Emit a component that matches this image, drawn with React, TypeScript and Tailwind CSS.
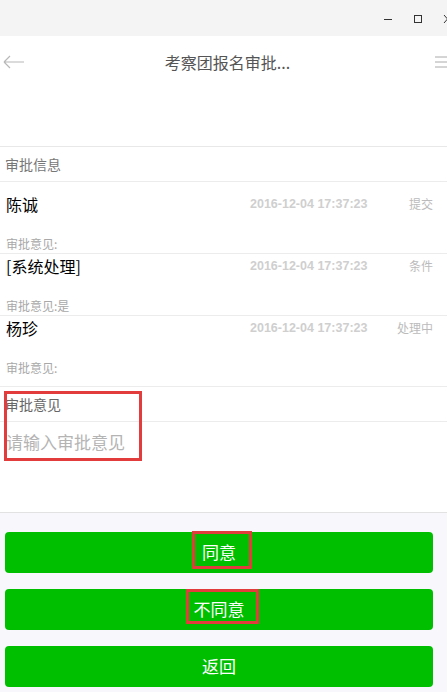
import React from "react";

const cjk = { fontFamily: '"Noto Sans CJK SC", "Liberation Sans", sans-serif' };

interface Record {
  name: string;
  time: string;
  status: string;
  opinion: string;
  top: string;
  bottom: string;
}

const records: Record[] = [
  { name: "陈诚", time: "2016-12-04 17:37:23", status: "提交", opinion: "审批意见:", top: "pt-[12px]", bottom: "pb-[2px]" },
  { name: "[系统处理]", time: "2016-12-04 17:37:23", status: "条件", opinion: "审批意见:是", top: "pt-[2px]", bottom: "pb-[2px]" },
  { name: "杨珍", time: "2016-12-04 17:37:23", status: "处理中", opinion: "审批意见:", top: "pt-[2px]", bottom: "pb-[11px]" },
];

function TitleBar() {
  return (
    <div className="h-[36px] bg-[#f4f4f4] flex items-center justify-end gap-[20px]">
      <svg width="10" height="10" viewBox="0 0 10 10" className="mt-[2px]">
        <line x1="1" y1="5.5" x2="9" y2="5.5" stroke="#333" strokeWidth="1" />
      </svg>
      <svg width="10" height="10" viewBox="0 0 10 10" className="mt-[2px]">
        <rect x="1.5" y="1.5" width="7" height="7" fill="none" stroke="#333" strokeWidth="1" />
      </svg>
      <svg width="4" height="10" viewBox="0 0 4 10" className="mt-[2px]">
        <line x1="1" y1="1" x2="8" y2="9" stroke="#333" strokeWidth="1" />
        <line x1="1" y1="9" x2="8" y2="1" stroke="#333" strokeWidth="1" />
      </svg>
    </div>
  );
}

function Header() {
  return (
    <div className="bg-white h-[111px] border-b border-[#e8e8e8]">
      <div className="h-[52px] flex items-center justify-between">
        <svg width="24" height="16" viewBox="0 0 24 16" className="ml-[2px]">
          <path d="M22 8H2M2 8L8 2M2 8L8 14" fill="none" stroke="#b8b8b8" strokeWidth="1.2" />
        </svg>
        <div className="text-[16px] text-[#555] pr-[6px]" style={cjk}>
          考察团报名审批...
        </div>
        <svg width="12" height="14" viewBox="0 0 12 14">
          <line x1="0" y1="2" x2="12" y2="2" stroke="#aaa" strokeWidth="1" />
          <line x1="0" y1="7" x2="12" y2="7" stroke="#aaa" strokeWidth="1" />
          <line x1="0" y1="12" x2="12" y2="12" stroke="#aaa" strokeWidth="1" />
        </svg>
      </div>
    </div>
  );
}

function RecordRow({ r }: { r: Record }) {
  return (
    <div className={`border-b border-[#ececec] ${r.top} ${r.bottom}`}>
      <div className="h-[20px] flex items-center">
        <div className="flex-1 pl-[6px] text-[16px] text-black" style={cjk}>
          {r.name}
        </div>
        <div
          className="text-[12.5px] font-bold text-[#cfcfcf] w-[118px]"
          style={{ fontFamily: '"Liberation Sans", Arial, sans-serif' }}
        >
          {r.time}
        </div>
        <div className="w-[79px] pr-[14px] text-right text-[12px] text-[#bbb]" style={cjk}>
          {r.status}
        </div>
      </div>
      <div className="mt-[23px] h-[14px] flex items-center pl-[6px] text-[12px] text-[#a8a8a8]" style={cjk}>
        {r.opinion}
      </div>
    </div>
  );
}

function GreenButton({ label, box }: { label: string; box?: "a" | "b" }) {
  return (
    <button className="relative h-[41px] ml-[5px] mr-[14px] rounded-[4px] bg-[#00bf00] text-white text-[17px] flex items-center justify-center" style={cjk}>
      <span className="-mt-[1px]">{label}</span>
      {box === "a" && (
        <span className="absolute left-[187px] top-[-1px] w-[60px] h-[38px] border-[3px] border-[#e23c3c]" />
      )}
      {box === "b" && (
        <span className="absolute left-[181px] top-[0px] w-[73px] h-[35px] border-[3px] border-[#e23c3c]" />
      )}
    </button>
  );
}

export default function App() {
  return (
    <div className="w-[447px] h-[692px] overflow-hidden bg-[#f8f8fc]" style={cjk}>
      <TitleBar />
      <Header />

      <div className="bg-white">
        <div className="h-[35px] flex items-center pl-[5px] text-[14px] text-[#777] border-b border-[#ececec]">
          审批信息
        </div>
        {records.map((r, i) => (
          <RecordRow key={i} r={r} />
        ))}

        <div className="relative border-b border-[#e2e2e2]">
          <div className="h-[35px] flex items-center pl-[5px] text-[14px] text-[#666] border-b border-[#ececec]">
            审批意见
          </div>
          <div className="h-[90px] pl-[6px] pt-[9px] text-[17px] leading-[22px] text-[#b4b4b4]">
            请输入审批意见
          </div>
          <span className="absolute left-[4px] top-[4px] w-[138px] h-[70px] border-[3px] border-[#e23c3c]" />
        </div>
      </div>

      <div className="flex flex-col gap-[16px] pt-[19px]">
        <GreenButton label="同意" box="a" />
        <GreenButton label="不同意" box="b" />
        <GreenButton label="返回" />
      </div>
    </div>
  );
}
